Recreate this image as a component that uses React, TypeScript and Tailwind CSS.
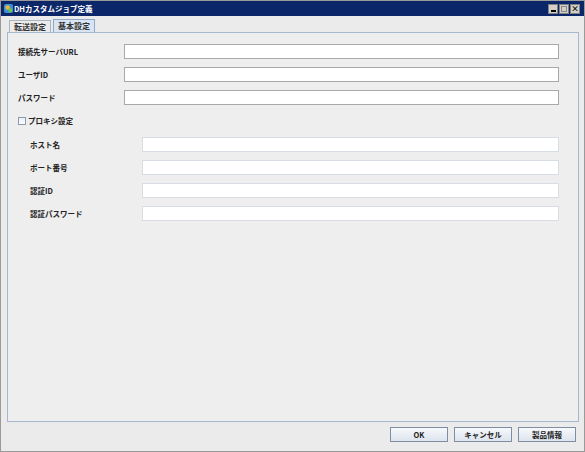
import React from "react";

const font = { fontFamily: '"Noto Sans CJK JP", "Liberation Sans", sans-serif' };

function Field({ label, disabled = false, indent = false }: { label: string; disabled?: boolean; indent?: boolean }) {
  return (
    <div className="flex h-[15px] items-center">
      <div className={indent ? "flex items-center h-[15px] w-[134px] pl-[22px] shrink-0" : "flex items-center h-[15px] w-[116px] pl-[10px] shrink-0"}>
        <span className="text-[7.5px] font-bold text-[#222] leading-none">{label}</span>
      </div>
      <div
        className={
          disabled
            ? "h-[15px] flex-1 mr-[19px] bg-white border border-[#d8dde4]"
            : "h-[15px] flex-1 mr-[19px] bg-white border border-[#a9a9a9]"
        }
      />
    </div>
  );
}

function WinBtn({ children }: { children: React.ReactNode }) {
  return (
    <div className="w-[10px] h-[10px] bg-[#d4d0c8] border border-[#808080] flex items-center justify-center text-[8px] leading-none text-black font-bold">
      {children}
    </div>
  );
}

function Button({ label }: { label: string }) {
  return (
    <button className="h-[15px] w-[58px] border border-[#7f8ea3] bg-gradient-to-b from-[#f7f9fc] to-[#dde4ee] text-[7.5px] font-bold text-[#222] leading-none">
      {label}
    </button>
  );
}

export default function App() {
  return (
    <div style={font} className="w-[585px] h-[452px] bg-[#ebebeb] border border-[#9a9a9a] flex flex-col overflow-hidden">
      {/* title bar */}
      <div className="h-[15px] shrink-0 bg-[#0c266a] flex items-center pl-[3px] pr-[4px]">
        <svg width="9" height="9" viewBox="0 0 10 10" className="shrink-0">
          <rect x="0" y="0" width="10" height="10" rx="2" fill="#3b8fd9" />
          <circle cx="4" cy="4" r="2.5" fill="#f2b632" />
          <rect x="5" y="5" width="4" height="4" fill="#6cc24a" />
        </svg>
        <span className="ml-[1px] text-[7.5px] font-bold text-white leading-none">DHカスタムジョブ定義</span>
        <div className="ml-auto flex gap-[1px]">
          <WinBtn>
            <span className="block w-[5px] h-[2px] bg-black mt-[4px]" />
          </WinBtn>
          <WinBtn>
            <span className="block w-[6px] h-[6px] border border-[#888]" />
          </WinBtn>
          <WinBtn>×</WinBtn>
        </div>
      </div>

      <div className="flex-1 flex flex-col pl-[6px] pr-[5px] pt-[3px] pb-[6px]">
        {/* tabs */}
        <div className="flex items-end h-[13px] pl-[2px] gap-[2px]">
          <div className="h-[12px] w-[42px] flex items-center justify-center border border-b-0 border-[#a9b4c2] bg-[#ececec] text-[8px] font-bold text-[#333] leading-none">
            転送設定
          </div>
          <div className="h-[13px] w-[42px] flex items-center justify-center border border-b-0 border-[#8fa9c7] bg-[#d9e5f2] text-[8px] font-bold text-[#333] leading-none">
            基本設定
          </div>
        </div>

        {/* panel */}
        <div className="h-[390px] border border-[#a6b8cf] bg-[#eeeeee] flex flex-col pt-[11px] gap-[8px]">
          <Field label="接続先サーバURL" />
          <Field label="ユーザID" />
          <Field label="パスワード" />
          <div className="flex items-center h-[10px] mt-[3px] pl-[10px]">
            <span className="w-[8px] h-[8px] border border-[#8a9bb0] bg-gradient-to-b from-[#e8eef6] to-[#ffffff]" />
            <span className="ml-[2px] text-[7.5px] font-bold text-[#222] leading-none">プロキシ設定</span>
          </div>
          <div className="flex flex-col gap-[8px] mt-[3px]">
            <Field label="ホスト名" disabled indent />
            <Field label="ポート番号" disabled indent />
            <Field label="認証ID" disabled indent />
            <Field label="認証パスワード" disabled indent />
          </div>
        </div>

        {/* buttons */}
        <div className="flex justify-end gap-[6px] mt-[5px] pr-[3px]">
          <Button label="OK" />
          <Button label="キャンセル" />
          <Button label="製品情報" />
        </div>
      </div>
    </div>
  );
}
